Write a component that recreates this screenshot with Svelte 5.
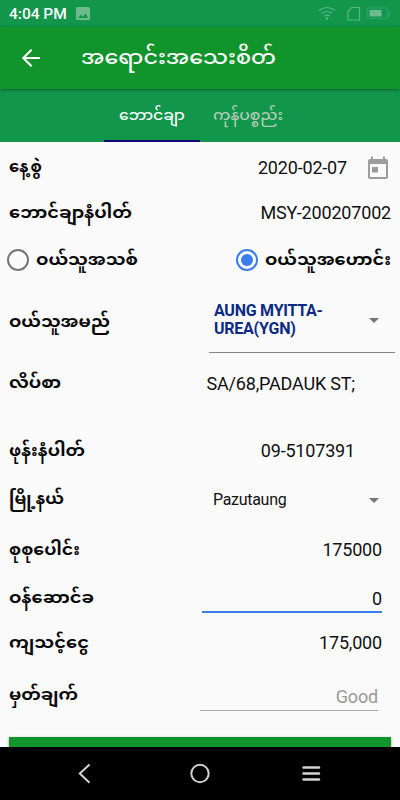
<script>
  const tabs = [
    { text: 'ဘောင်ချာ', width: 66, active: true },
    { text: 'ကုန်ပစ္စည်း', width: 70, active: false }
  ];
</script>

{#snippet mm(text, width, size = 16.5, y = 23)}
  <svg class="mm" {width} height="36" style="font-size:{size}px">
    <text x="0" {y} textLength={width} lengthAdjust="spacingAndGlyphs">{text}</text>
  </svg>
{/snippet}

<div class="screen">
  <header class="status">
    <span class="clock">4:04 PM</span>
    <svg class="photo" width="14" height="14" viewBox="0 0 14 14">
      <rect width="14" height="13" rx="1.5" fill="#6dbb8e" />
      <path d="M2 11l3-3.3 2 2 2.7-3.4L12 11z" fill="#11964c" />
    </svg>
    <span class="grow"></span>
    <svg width="74" height="16" viewBox="0 0 74 16" fill="none" stroke="#5bb584">
      <path d="M1 4.5Q9 -1.5 17 4.5M3.7 7.5Q9 3.5 14.3 7.5M6.2 10.3Q9 8 11.8 10.3" stroke-width="1.2" />
      <circle cx="9" cy="12.5" r="1.3" fill="#5bb584" stroke="none" />
      <path d="M33.5 1.5H41.5V14H30V5.5z" stroke-width="1.2" />
      <rect x="49.5" y="2" width="20" height="10.500" rx="1" stroke="#28a063" stroke-width="1.5" />
      <rect x="51.5" y="4" width="12" height="6.5" fill="#6dbb8e" stroke="none" />
      <path d="M71.5 4.500v6" stroke="#28a063" stroke-width="2" />
    </svg>
  </header>

  <div class="bar">
    <svg width="20" height="20" viewBox="0 0 20 20" fill="none" stroke="#fff" stroke-width="2.1">
      <path d="M19 10H2.800M10.600 1.700L2.300 10l8.300 8.300" />
    </svg>
    <h1>{@render mm('အရောင်းအသေးစိတ်', 195, 20.5, 24)}</h1>
  </div>

  <nav class="tabs">
    {#each tabs as tab}
      <div class="tab" class:active={tab.active}>{@render mm(tab.text, tab.width, 15, 23.5)}</div>
    {/each}
  </nav>

  <main>
    <div class="row date">
      <b>{@render mm('နေ့စွဲ', 33, 16.5, 22)}</b>
      <span class="value">2020-02-07</span>
      <svg class="cal" width="22" height="24" viewBox="0 0 22 24">
        <path fill="#9c9c9c" fill-rule="evenodd" d="M4 .5h2V3h10V.5h2V3h1a2 2 0 0 1 2 2v16a2 2 0 0 1-2 2H3a2 2 0 0 1-2-2V5a2 2 0 0 1 2-2h1zM3 8v13h16V8zM5 11h6v5.500H5z" />
      </svg>
    </div>
    <div class="row invoice">
      <b>{@render mm('ဘောင်ချာနံပါတ်', 123)}</b>
      <span class="value">MSY-200207002</span>
    </div>
    <div class="row radios">
      <label><i class="radio"></i><b>{@render mm('ဝယ်သူအသစ်', 102)}</b></label>
      <label><i class="radio on"></i><b>{@render mm('ဝယ်သူအဟောင်း', 126)}</b></label>
    </div>
    <div class="row customer">
      <b>{@render mm('ဝယ်သူအမည်', 101, 16.5, 23.5)}</b>
      <div class="select"><strong>AUNG MYITTA-<br />UREA(YGN)</strong><i class="caret"></i></div>
    </div>
    <div class="row address">
      <b>{@render mm('လိပ်စာ', 52, 16.5, 22)}</b><span class="value">SA/68,PADAUK ST;</span>
    </div>
    <div class="row phone">
      <b>{@render mm('ဖုန်းနံပါတ်', 76)}</b><span class="value">09-5107391</span>
    </div>
    <div class="row town">
      <b>{@render mm('မြို့နယ်', 55, 16.5, 21.5)}</b>
      <div class="pick"><span>Pazutaung</span><i class="caret"></i></div>
    </div>
    <div class="row total">
      <b>{@render mm('စုစုပေါင်း', 71, 16.5, 23)}</b><span class="value">175000</span>
    </div>
    <div class="row fee">
      <b>{@render mm('ဝန်ဆောင်ခ', 85, 16.5, 23.5)}</b><span class="value input">0</span>
    </div>
    <div class="row due">
      <b>{@render mm('ကျသင့်ငွေ', 80, 16.5, 23)}</b><span class="value">175,000</span>
    </div>
    <div class="row note">
      <b>{@render mm('မှတ်ချက်', 69, 16.5, 24)}</b><span class="value hint">Good</span>
    </div>
    <div class="submit"></div>
  </main>

  <footer>
    <svg width="400" height="53" viewBox="0 0 400 53" fill="none" stroke="#d2d2d2" stroke-width="2">
      <path d="M89.500 17.500L79.800 26.500l9.700 9.200" />
      <circle cx="200" cy="26.500" r="8.700" />
      <path d="M303.500 20.500h15.500M303.500 26.500h15.500M303.500 32.500h15.500" stroke-width="2.500" stroke-linecap="round" />
    </svg>
  </footer>
</div>

<style>
  :global(body) { margin: 0; }
  * { box-sizing: border-box; }
  .screen {
    width: 400px; height: 800px; overflow: hidden;
    display: flex; flex-direction: column;
    background: #fafafa; color: #111;
    font-family: Roboto, "Noto Sans Myanmar", "Noto Sans", sans-serif;
  }
  .mm { display: block; overflow: visible; fill: currentColor; }
  .status { height: 27px; flex: none; display: flex; align-items: center; padding: 0 8px 0 9px; background: #11964c; }
  .clock { color: #fff; font-size: 15.500px; font-weight: 500; line-height: 27px; padding-top: 1px; width: 67px; white-space: nowrap; }
  .grow { flex: 1; }
  .bar {
    height: 62px; flex: none; display: flex; align-items: center; gap: 40px; padding-left: 21px;
    color: #fff; background: #11942b; box-shadow: 0 1px 4px rgba(0, 0, 0, .35); z-index: 1;
  }
  h1 { margin: 0; font-weight: 500; }
  .tabs { height: 53px; flex: none; display: flex; justify-content: center; background: #11964c; color: #b4ccb7; }
  .tab { width: 96px; display: flex; justify-content: center; padding-top: 7px; border-bottom: 2px solid transparent; font-weight: 500; }
  .tab.active { color: #fff; border-color: #0b0b78; }
  main { height: 605px; flex: none; display: flex; flex-direction: column; }
  .row { flex: none; display: flex; align-items: center; padding: 0 9px; }
  .row > b { margin-right: auto; }
  b { font-weight: 700; color: #0a0a0a; }
  .value { font-size: 18px; letter-spacing: -.18px; line-height: 24px; white-space: nowrap; }
  .date { height: 52px; padding-right: 11px; }
  .date .cal { margin-left: 20px; }
  .invoice { height: 37px; }
  .radios { height: 57px; justify-content: space-between; padding-left: 7px; }
  label { display: flex; align-items: center; gap: 7px; }
  .radio { width: 22px; height: 22px; border: 2px solid #757575; border-radius: 50%; display: grid; place-items: center; }
  .radio.on { border-color: #3b7ded; }
  .radio.on::after { content: ""; width: 12px; height: 12px; border-radius: 50%; background: #3b7ded; }
  .customer { height: 65px; padding-right: 5px; }
  .select {
    width: 186px; height: 65px; display: flex; align-items: center; justify-content: space-between;
    padding: 0 16px 0 5px; border-bottom: 1px solid #858585;
  }
  .select strong { color: #0b2a86; font-size: 16px; letter-spacing: -.25px; line-height: 18px; font-weight: 700; }
  .caret { border: 5.500px solid transparent; border-top-color: #757575; border-bottom: 0; }
  .address { height: 74px; padding: 0 45px 12px 9px; }
  .phone { height: 48px; padding-right: 45px; }
  .town { height: 50px; padding-right: 21px; }
  .pick { width: 166px; display: flex; align-items: center; justify-content: space-between; font-size: 16px; letter-spacing: -.3px; line-height: 20px; }
  .total { height: 50px; padding-right: 18px; }
  .fee { height: 44px; padding-right: 18px; }
  .input { width: 180px; height: 38px; line-height: 47px; text-align: right; border-bottom: 2px solid #3b7ded; align-self: flex-start; }
  .due { height: 48px; padding-right: 18px; }
  .note { height: 54px; padding-right: 22px; }
  .hint { width: 178px; height: 34px; line-height: 39px; text-align: right; color: #999; border-bottom: 1px solid #a9a9a9; }
  .submit { margin: 16px 9px 0; height: 10px; flex: none; background: #11942b; box-shadow: 0 1px 3px rgba(0, 0, 0, .4); }
  footer { height: 53px; flex: none; background: #000; z-index: 1; }
  footer svg { display: block; }
</style>
